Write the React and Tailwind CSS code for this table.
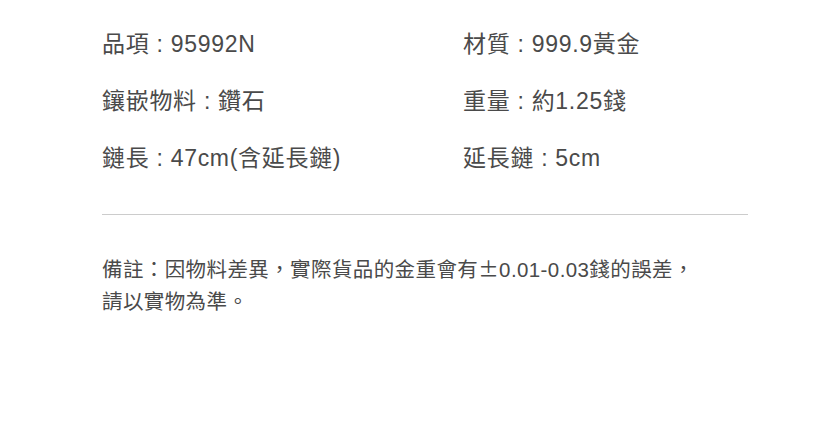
const font = { fontFamily: '"Liberation Sans", Arial, "Noto Sans CJK TC", sans-serif' }

const specs = [
  ['品項 : 95992N', '材質 : 999.9黃金'],
  ['鑲嵌物料 : 鑽石', '重量 : 約1.25錢'],
  ['鏈長 : 47cm(含延長鏈)', '延長鏈 : 5cm'],
]

export default function App() {
  return (
    <div className="w-[840px] h-[426px] bg-white text-[#4a4a4a]" style={font}>
      <div className="ml-[102px] w-[646px] pt-[16px]">
        <div className="grid grid-cols-[361px_1fr] tracking-[0.7px]">
          {specs.map(([l, r], i) => [
            <div key={'l' + i} className="h-[57px] flex items-center text-[23px]">{l}</div>,
            <div key={'r' + i} className="h-[57px] flex items-center text-[23px]">{r}</div>,
          ])}
        </div>
        <div className="mt-[27px] border-t border-[#cccccc]" />
        <p className="mt-[37px] text-[20.5px] leading-[32px] tracking-[0.4px]">
          備註：因物料差異，實際貨品的金重會有<span style={{ fontFamily: '"Noto Sans CJK TC", sans-serif' }}>±</span>0.01-0.03錢的誤差，<br />
          請以實物為準。
        </p>
      </div>
    </div>
  )
}
